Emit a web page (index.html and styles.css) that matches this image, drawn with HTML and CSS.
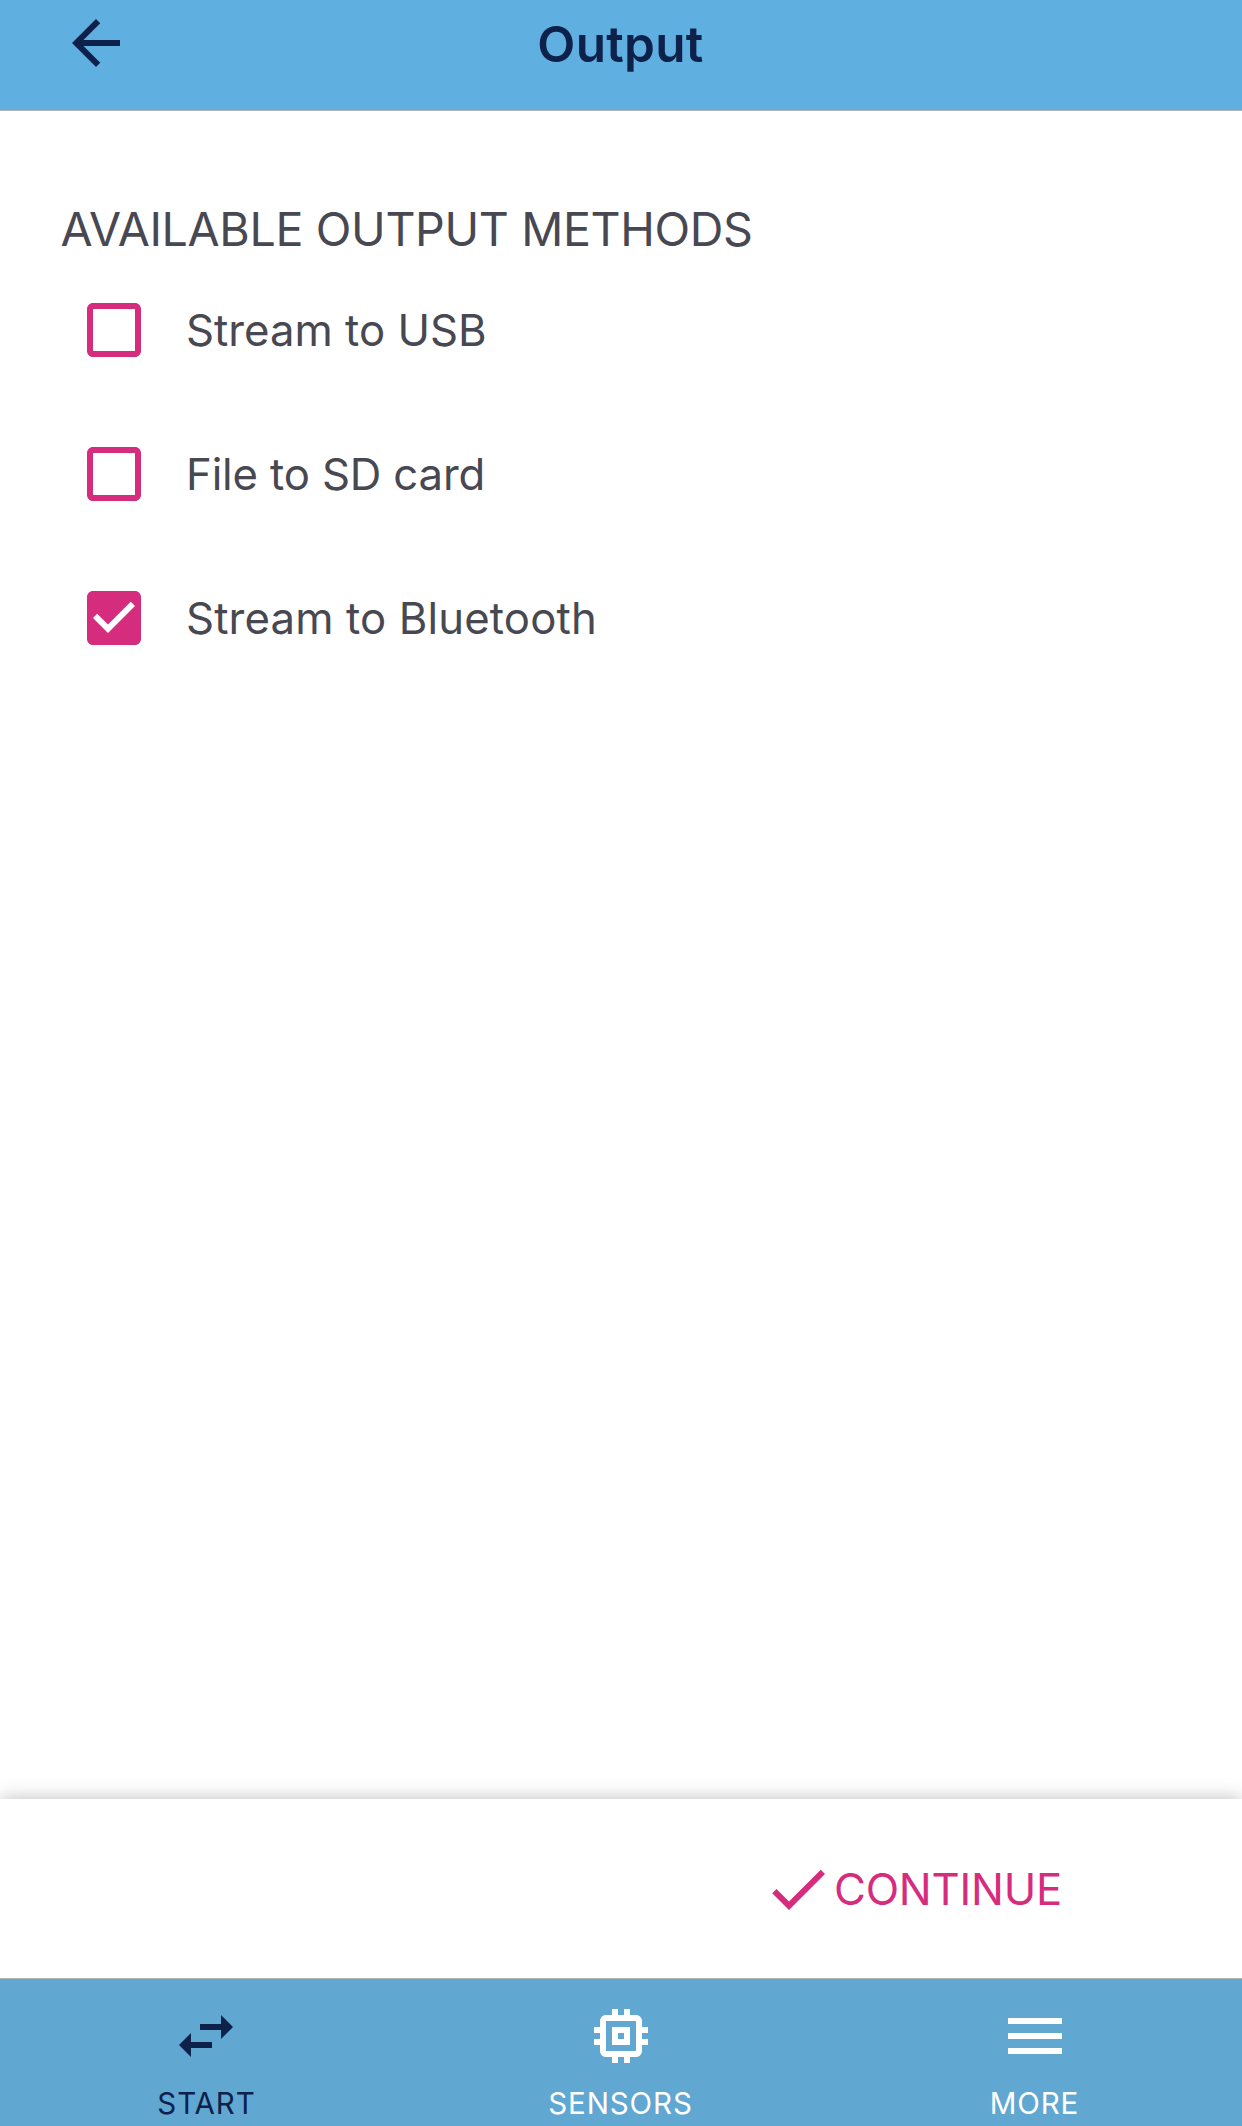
FILE: index.html
```html
<!DOCTYPE html>
<html lang="en">
<head>
<meta charset="utf-8">
<title>Output</title>
<link rel="stylesheet" href="styles.css">
</head>
<body>
<header class="header">
  <button class="back" aria-label="Back">
    <svg class="icon" viewBox="0 0 24 24"><path d="M20 11H7.83l5.59-5.59L12 4l-8 8 8 8 1.41-1.41L7.83 13H20v-2z"/></svg>
  </button>
  <h1 class="title">Output</h1>
</header>
<main class="content">
  <h2 class="section-title">AVAILABLE OUTPUT METHODS</h2>
  <ul class="options">
    <li class="option">
      <svg class="icon" viewBox="0 0 24 24"><path d="M19 5v14H5V5h14m0-2H5c-1.1 0-2 .9-2 2v14c0 1.1.9 2 2 2h14c1.1 0 2-.9 2-2V5c0-1.1-.9-2-2-2z"/></svg>
      <span>Stream to USB</span>
    </li>
    <li class="option">
      <svg class="icon" viewBox="0 0 24 24"><path d="M19 5v14H5V5h14m0-2H5c-1.1 0-2 .9-2 2v14c0 1.1.9 2 2 2h14c1.1 0 2-.9 2-2V5c0-1.1-.9-2-2-2z"/></svg>
      <span class="narrow">File to SD card</span>
    </li>
    <li class="option">
      <svg class="icon" viewBox="0 0 24 24"><path d="M19 3H5c-1.11 0-2 .9-2 2v14c0 1.1.89 2 2 2h14c1.11 0 2-.9 2-2V5c0-1.1-.89-2-2-2zm-9 14l-5-5 1.41-1.41L10 14.17l7.59-7.59L19 8l-9 9z"/></svg>
      <span class="wide">Stream to Bluetooth</span>
    </li>
  </ul>
</main>
<div class="actions">
  <button class="continue">
    <svg class="icon" viewBox="0 0 24 24"><path d="M9 16.17L4.83 12l-1.42 1.41L9 19 21 7l-1.41-1.41z"/></svg>
    <span>CONTINUE</span>
  </button>
</div>
<nav class="tabs">
  <a class="tab active">
    <svg class="icon" viewBox="0 0 24 24"><path d="M6.99 11L3 15l3.99 4v-3H14v-2H6.99v-3zM21 9l-3.99-4v3H10v2h7.01v3L21 9z"/></svg>
    <span>START</span>
  </a>
  <a class="tab">
    <svg class="icon" viewBox="0 0 24 24"><path d="M15 9H9v6h6V9zm-2 4h-2v-2h2v2zm8-2V9h-2V7c0-1.1-.9-2-2-2h-2V3h-2v2h-2V3H9v2H7c-1.1 0-2 .9-2 2v2H3v2h2v2H3v2h2v2c0 1.1.9 2 2 2h2v2h2v-2h2v2h2v-2h2c1.1 0 2-.9 2-2v-2h2v-2h-2v-2h2zm-4 6H7V7h10v10z"/></svg>
    <span>SENSORS</span>
  </a>
  <a class="tab">
    <svg class="icon" viewBox="0 0 24 24"><path d="M3 18h18v-2H3v2zm0-5h18v-2H3v2zm0-7v2h18V6H3z"/></svg>
    <span>MORE</span>
  </a>
</nav>
</body>
</html>
```

FILE: styles.css
```css
* { box-sizing: border-box; }

body {
  margin: 0;
  height: 2126px;
  display: flex;
  flex-direction: column;
  background: #fff;
  color: #484852;
  font-family: Inter, "Liberation Sans", sans-serif;
  overflow: hidden;
}

button {
  padding: 0;
  border: 0;
  background: none;
  color: inherit;
  font: inherit;
}

.icon {
  display: block;
  flex: none;
  width: 72px;
  height: 72px;
  fill: currentColor;
}

.header {
  display: grid;
  grid-template-columns: 1fr auto 1fr;
  align-items: start;
  height: 111px;
  background: #60afe1;
  border-bottom: 1px solid #b2b2b2;
  color: #0d214a;
}

.back {
  justify-self: start;
  margin: 7px 0 0 60px;
}

.title {
  margin: 0;
  padding-right: 1px;
  font-size: 49.5px;
  font-weight: 600;
  line-height: 88px;
  letter-spacing: 0.3px;
}

.content {
  flex: 1;
  padding-top: 89px;
}

.section-title {
  margin: 0;
  padding-left: 60.5px;
  font-size: 46.6px;
  font-weight: 400;
  line-height: 58px;
  letter-spacing: -0.37px;
}

.options {
  margin: 0;
  padding: 0;
  list-style: none;
}

.option {
  display: flex;
  align-items: center;
  gap: 36px;
  height: 144px;
  padding-left: 78px;
  font-size: 43.7px;
}

.option .icon { color: #d62c7e; }

.narrow { letter-spacing: -0.14px; }

.wide { letter-spacing: 0.14px; }

.actions {
  display: flex;
  justify-content: flex-end;
  height: 179px;
  padding: 1px 180px 0 0;
  background: #fff;
  box-shadow: 0 0 18px rgba(0, 0, 0, 0.27);
}

.continue {
  display: flex;
  align-items: center;
  color: #d62c7e;
  font-size: 43.7px;
  letter-spacing: -0.23px;
}

.tabs {
  position: relative;
  display: grid;
  grid-template-columns: repeat(3, 1fr);
  height: 148px;
  background: #60a7d1;
  border-top: 1px solid #b2b2b2;
  color: #fff;
}

.tab {
  display: flex;
  flex-direction: column;
  align-items: center;
  gap: 11px;
  padding-top: 21px;
  font-size: 29.5px;
  line-height: 40px;
  letter-spacing: 0.9px;
}

.tab.active { color: #0d214a; }

.tab.active .icon { margin-right: 2px; }

.tab span { margin-right: 1px; }
```
